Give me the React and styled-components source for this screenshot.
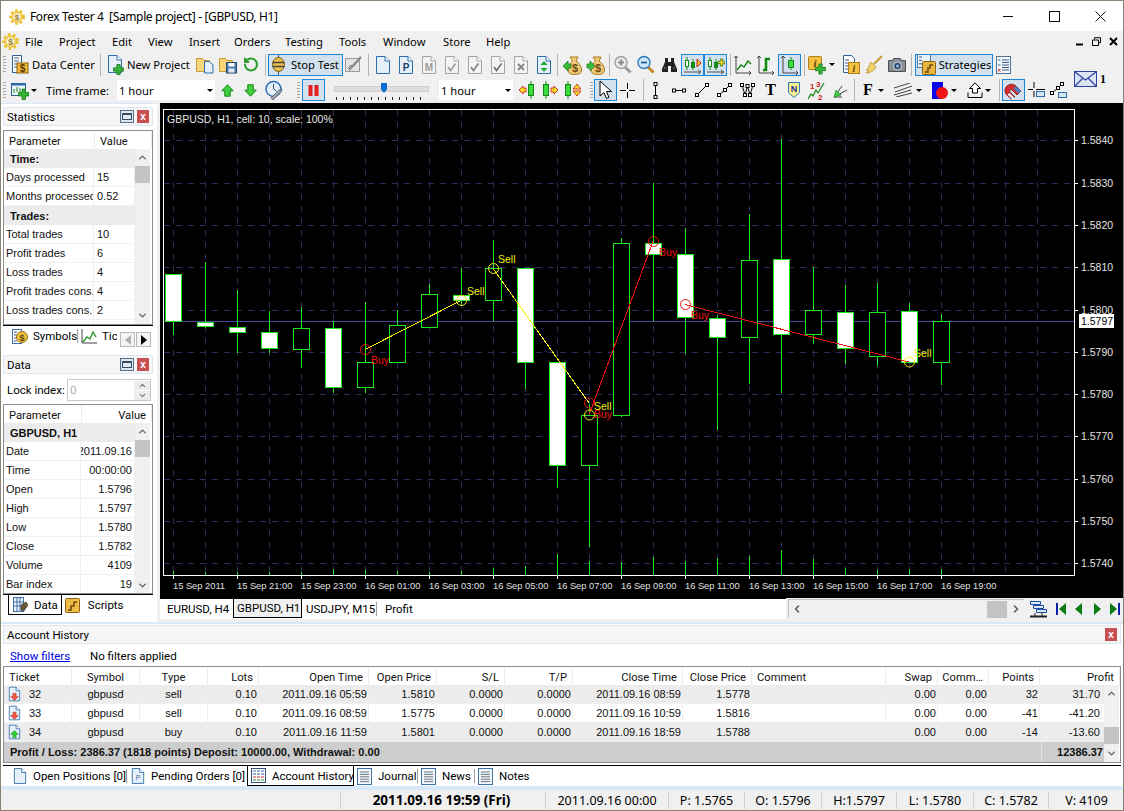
import React from 'react';
import styled, { createGlobalStyle } from 'styled-components';
import { ChevronUp, ChevronDown, ChevronLeft, ChevronRight, RotateCcw } from 'lucide-react';

const UI = '"Noto Sans", "Liberation Sans", sans-serif';
const TAB = 'Roboto, "Liberation Sans", sans-serif';
const GRID = '"Liberation Sans", Arial, sans-serif';

const Global = createGlobalStyle`
  html, body { margin: 0; padding: 0; background: #f0f0f0; }
  * { box-sizing: border-box; }
`;

const Window = styled.div`
  width: 1124px;
  height: 811px;
  display: flex;
  flex-direction: column;
  overflow: hidden;
  background: #f0f0f0;
  color: #000;
  font: 11.5px ${TAB};
  outline: 1px solid #8a8374;
  outline-offset: -1px;
`;

const TitleBar = styled.div`
  height: 31px;
  flex: none;
  background: #fff;
  display: flex;
  align-items: center;
  padding: 2px 0 0 9px;
  gap: 5px;
`;
const TitleText = styled.div`
  font: 12px ${UI};
  white-space: pre;
  letter-spacing: -0.36px;
`;
const WinButtons = styled.div`
  margin-left: auto;
  margin-right: 1px;
  display: flex;
`;
const WinButton = styled.div`
  width: 46px;
  height: 30px;
  display: flex;
  align-items: center;
  justify-content: center;
`;

const MenuBar = styled.div`
  height: 21px;
  flex: none;
  display: flex;
  align-items: center;
  padding-left: 2px;
  font: 11.2px ${UI};
`;
const MenuItem = styled.div`
  width: ${p => p.$w}px;
  flex: none;
`;
const DocButtons = styled.div`
  margin-left: auto;
  margin-right: 6px;
  display: flex;
  align-items: center;
  gap: 8px;
`;

const ToolArea = styled.div`
  display: flex;
  flex: none;
  height: 51px;
  font: 11.2px ${UI};
`;
const ToolRows = styled.div`
  width: 1070px;
`;
const ToolRow = styled.div`
  height: ${p => p.$h}px;
  display: flex;
  align-items: center;
  padding-left: 3px;
`;
const Grip = styled.div`
  width: 3px;
  height: 17px;
  flex: none;
  margin-left: ${p => p.$ml || 0}px;
  background: repeating-linear-gradient(#a8a8a8 0 1px, transparent 1px 3px);
`;
const Sep = styled.div`
  width: 1px;
  height: 22px;
  flex: none;
  background: #b4b4b4;
  margin: 0 ${p => p.$mr}px 0 ${p => p.$ml}px;
`;
const Tool = styled.div`
  width: ${p => p.$w}px;
  height: 22px;
  flex: none;
  margin-left: ${p => p.$ml || 0}px;
  display: flex;
  align-items: center;
  justify-content: center;
  gap: 3px;
  white-space: nowrap;
  ${p => p.$on && 'background: #d3e1ee; outline: 1px solid #1c86d8; outline-offset: -1px;'}
  ${p => p.$text && 'justify-content: flex-start;'}
`;
const Caret = styled.div`
  width: 0;
  height: 0;
  flex: none;
  margin-left: ${p => p.$ml || 0}px;
  border-left: 3px solid transparent;
  border-right: 3px solid transparent;
  border-top: 3px solid #000;
`;
const Label = styled.div`
  margin-left: ${p => p.$ml}px;
  width: ${p => p.$w}px;
  flex: none;
  white-space: nowrap;
`;
const SerifGlyph = styled.div`
  font: bold 16px "Liberation Serif", serif;
  line-height: 1;
`;
const Select = styled.div`
  width: ${p => p.$w}px;
  height: 20px;
  flex: none;
  margin-left: ${p => p.$ml}px;
  background: #fff;
  display: flex;
  align-items: center;
  justify-content: space-between;
  padding: 0 2px;
`;
const SliderBox = styled.div`
  width: 95px;
  height: 22px;
  flex: none;
  margin-left: 9px;
  display: flex;
  flex-direction: column;
  align-items: stretch;
  padding-top: 7px;
  position: relative;
`;
const SliderTrack = styled.div`
  height: 6px;
  background: #dedede;
  border: 1px solid #cfcfcf;
`;
const SliderThumb = styled.div`
  position: absolute;
  left: 47px;
  top: 4px;
  width: 6px;
  height: 10px;
  background: #0a6fd0;
  clip-path: polygon(0 0, 100% 0, 100% 65%, 50% 100%, 0 65%);
`;
const SliderTicks = styled.div`
  height: 3px;
  margin: 5px 2px 0;
  background: repeating-linear-gradient(90deg, #222 0 1px, transparent 1px 7px);
`;
const MailBox = styled.div`
  display: flex;
  align-items: center;
  gap: 3px;
  margin: 15px 0 0 4px;
  height: 24px;
  font: bold 12px "Liberation Serif", serif;
`;

const Main = styled.div`
  display: flex;
  height: 519px;
  flex: none;
`;
const Side = styled.div`
  width: 157px;
  flex: none;
  padding: 3px 4px 0 3px;
  background: #fff;
  border-top: 1px solid #d7e9f8;
`;
const ChartCol = styled.div`
  width: 964px;
  margin-left: 3px;
  flex: none;
  display: flex;
  flex-direction: column;
`;
const ChartSvg = styled.svg`
  display: block;
  width: 964px;
  height: 495px;
  background: #000;
  font-family: ${GRID};
`;
const ChartTabs = styled.div`
  height: 22px;
  display: flex;
  align-items: stretch;
`;
const ChartTabStrip = styled.div`
  width: 626px;
  flex: none;
  background: #fff;
  border-top: 1px solid #000;
  display: flex;
  padding-left: 3px;
  height: 21px;
`;
const ChartTab = styled.div`
  height: 19px;
  display: flex;
  align-items: center;
  padding: 0 4px;
  width: ${p => p.$w}px;
  flex: none;
  white-space: nowrap;
  ${p => p.$on && 'background: #f0f0f0; border: solid #000; border-width: 0 1px 1px; padding-left: 3px;'}
`;
const TabDivider = styled.div`
  width: 1px;
  height: 14px;
  flex: none;
  background: #a0a0a0;
  margin: 3px ${p => p.$mr || 4}px 0 ${p => p.$ml || 0}px;
`;
const HScroll = styled.div`
  width: 236px;
  height: 19px;
  flex: none;
  margin: 1px 0 0 2px;
  border: solid #c0c0c0;
  border-width: 1px 0 0 1px;
  background: #f0f0f0;
  display: flex;
  align-items: center;
  color: #555;
  padding: 0 2px;
`;
const HThumb = styled.div`
  width: 20px;
  height: 17px;
  background: #c4c4c4;
  margin-left: auto;
  margin-right: 3px;
`;
const NavButtons = styled.div`
  display: flex;
  align-items: center;
  margin-left: 5px;
  gap: 8px;
`;

const PanelHead = styled.div`
  height: 19px;
  background: #f6f6f6;
  border: 1px solid #dce6ee;
  display: flex;
  align-items: center;
  justify-content: space-between;
  padding: 0 3px 0 3px;
`;
const PanelBtns = styled.div`
  display: flex;
  gap: 3px;
  align-items: center;
`;
const RedClose = styled.div`
  width: 12px;
  height: 13px;
  background: #c75050;
  color: #fff;
  font: bold 10px ${GRID};
  display: flex;
  align-items: center;
  justify-content: center;
  line-height: 1;
`;
const RestoreBox = styled.div`
  width: 14px;
  height: 13px;
  border: 1px solid #51708f;
  background: #dfe8f0;
  display: flex;
  align-items: center;
  justify-content: center;
  &::after {
    content: '';
    width: 8px;
    height: 4px;
    border: 1px solid #3a4d60;
    border-top-width: 2px;
  }
`;
const GridTable = styled.div`
  height: ${p => p.$h}px;
  margin-top: ${p => p.$mt || 0}px;
  border: 1px solid #8e8e8e;
  background: #fff;
  overflow: hidden;
  font: 11px ${GRID};
  color: #111;
`;
const HeadRow = styled.div`
  display: grid;
  grid-template-columns: ${p => p.$cols};
  height: ${p => p.$h || 18}px;
  background: #fff;
`;
const HeadCell = styled.div`
  display: flex;
  align-items: center;
  padding: 2px 5px 0;
  white-space: nowrap;
  overflow: hidden;
  border-right: 1px solid #ececec;
  justify-content: ${p => p.$align || 'flex-start'};
  font: 11.2px ${TAB};
`;
const BodyWrap = styled.div`
  display: flex;
`;
const Rows = styled.div`
  flex: 1;
  min-width: 0;
`;
const Row = styled.div`
  display: grid;
  grid-template-columns: ${p => p.$cols};
  height: ${p => p.$h || 19}px;
  border-bottom: 1px solid #f0f0f0;
  background: ${p => p.$bg || '#fff'};
`;
const Cell = styled.div`
  display: flex;
  align-items: center;
  white-space: nowrap;
  overflow: hidden;
  padding: 0 ${p => p.$pr ?? 3}px 0 ${p => p.$pl ?? 3}px;
  border-right: 1px solid #f0f0f0;
  justify-content: ${p => p.$align || 'flex-start'};
  gap: 8px;
`;
const GroupRow = styled.div`
  height: 19px;
  background: #ececec;
  font-weight: bold;
  display: flex;
  align-items: center;
  padding-left: 6px;
`;
const VScroll = styled.div`
  width: 15px;
  flex: none;
  margin-right: ${p => p.$mr || 2}px;
  background: #f0f0f0;
  display: flex;
  flex-direction: column;
  height: ${p => p.$h}px;
  color: #606060;
`;
const ScrollBtn = styled.div`
  height: 17px;
  flex: none;
  display: flex;
  align-items: center;
  justify-content: center;
`;
const VThumb = styled.div`
  height: 17px;
  flex: none;
  margin-top: ${p => p.$mt || 0}px;
  margin-bottom: auto;
  background: #c4c4c4;
`;
const SideTabs = styled.div`
  height: ${p => p.$h}px;
  border-top: 1px solid #000;
  display: flex;
  align-items: flex-start;
  position: relative;
`;
const SideTab = styled.div`
  height: 20px;
  display: flex;
  align-items: center;
  gap: 5px;
  flex: none;
  padding-left: ${p => p.$pl}px;
  width: ${p => p.$w}px;
  margin-left: ${p => p.$ml || 0}px;
  white-space: nowrap;
  overflow: hidden;
  ${p => p.$on && 'border: solid #000; border-width: 0 1px 1px; margin-top: 0; background: #fff;'}
`;
const ArrowBtn = styled.div`
  width: 15px;
  height: 15px;
  flex: none;
  margin: 6px 0 0 ${p => p.$ml}px;
  border: 1px solid #b8b8b8;
  background: #f4f4f4;
  display: flex;
  align-items: center;
  justify-content: center;
`;
const Triangle = styled.div`
  width: 0;
  height: 0;
  border-top: 5px solid transparent;
  border-bottom: 5px solid transparent;
  ${p => p.$dir === 'l' ? `border-right: 6px solid ${p.$c};` : `border-left: 6px solid ${p.$c};`}
`;
const LockRow = styled.div`
  height: 30px;
  display: flex;
  align-items: center;
  padding: 2px 0 0 4px;
`;
const LockLabel = styled.div`
  width: 60px;
  flex: none;
  white-space: nowrap;
`;
const SpinInput = styled.div`
  width: 84px;
  height: 22px;
  flex: none;
  border: 1px solid #c8c8c8;
  color: #b0b0b0;
  padding-left: 2px;
  display: flex;
  align-items: center;
  justify-content: space-between;
`;
const Spin = styled.div`
  width: 16px;
  height: 100%;
  display: flex;
  flex-direction: column;
  gap: 1px;
  padding: 1px 0;
`;
const SpinPart = styled.div`
  flex: 1;
  background: #ececec;
  display: flex;
  align-items: center;
  justify-content: center;
  color: #777;
`;

const Dock = styled.div`
  height: 168px;
  flex: none;
  background: #fff;
  border-top: 2px solid #d7e9f8;
  border-bottom: 4px solid #d7e9f8;
  padding: 1px 3px 0;
`;
const FilterRow = styled.div`
  height: 22px;
  display: flex;
  align-items: center;
  padding: 2px 0 0 7px;
`;
const FilterLink = styled.div`
  color: #0000e0;
  text-decoration: underline;
  width: 80px;
`;
const SummaryRow = styled.div`
  display: flex;
  height: 20px;
  background: #cdcdcd;
  font-weight: bold;
  align-items: center;
`;
const SummaryText = styled.div`
  flex: 1;
  padding-left: 6px;
`;
const SummaryTotal = styled.div`
  width: 63px;
  flex: none;
  height: 100%;
  display: flex;
  align-items: center;
  justify-content: flex-end;
  padding-right: 1px;
  border-left: 1px solid #e4e4e4;
`;
const BottomTabs = styled.div`
  height: 22px;
  margin-top: 2px;
  border-top: 1px solid #000;
  display: flex;
  align-items: flex-start;
  padding-left: 10px;
`;
const BottomTab = styled.div`
  height: 20px;
  display: flex;
  align-items: center;
  gap: 6px;
  flex: none;
  width: ${p => p.$w}px;
  padding-left: ${p => p.$pl || 0}px;
  white-space: nowrap;
  ${p => p.$on && 'border: solid #000; border-width: 0 1px 1px;'}
`;

const StatusBar = styled.div`
  height: 20px;
  flex: none;
  display: flex;
  align-items: center;
  font: 12.5px ${UI};
`;
const StatusCell = styled.div`
  width: ${p => p.$w}px;
  flex: none;
  height: 17px;
  display: flex;
  align-items: center;
  justify-content: center;
  white-space: nowrap;
  ${p => p.$sep && 'border-left: 1px solid #d0d0d0;'}
  ${p => p.$bold && 'font-weight: bold; font-size: 13.5px; padding-right: 3px;'}
`;

const Svg = styled.svg`
  display: block;
  flex: none;
`;

/* ---------- icons ---------- */

const Logo = ({ s = 16 }) => (
  <Svg width={s} height={s} viewBox="0 0 16 16">
    <circle cx="8" cy="8" r="6.4" fill="none" stroke="#efc22c" strokeWidth="3" strokeDasharray="2.4 2.2" />
    <circle cx="8" cy="8" r="5.4" fill="#f7d862" stroke="#d9a51c" strokeWidth="0.6" />
    <circle cx="8" cy="8" r="3.6" fill="#f1efe3" />
    <text x="8" y="11" textAnchor="middle" fontSize="8" fontWeight="bold" fill="#a07a2a" fontFamily={GRID}>$</text>
  </Svg>
);

const Doc = ({ w = 16, h = 20, fill = '#e6f0fa', line = '#2f6da8', children }) => (
  <Svg width={w} height={h} viewBox="0 0 16 20">
    <path d="M1.5 1.5h8.5l4.5 4.5v12.5h-13z" fill={fill} stroke={line} />
    <path d="M10 1.5v4.5h4.5" fill="#fff" stroke={line} />
    {children}
  </Svg>
);
const Plus = ({ x, y, s = 9, c = '#35b535' }) => (
  <path
    d={`M${x + s / 3} ${y}h${s / 3}v${s / 3}h${s / 3}v${s / 3}h${-s / 3}v${s / 3}h${-s / 3}v${-s / 3}h${-s / 3}v${-s / 3}h${s / 3}z`}
    fill={c}
    stroke="#146c14"
    strokeWidth="0.7"
  />
);
const Lines = ({ x = 4, y = 8, w = 8, n = 4, c = '#3a5f86', gap = 2.4 }) => (
  <path d={Array.from({ length: n }, (_, i) => `M${x} ${y + i * gap}h${w}`).join('')} stroke={c} strokeWidth="1" />
);

const DataCenterIcon = () => (
  <Svg width={18} height={21} viewBox="0 0 18 21">
    <path d="M1.5 1.5h9v17h-9z" fill="#fff" stroke="#335f8c" />
    <Lines x={3} y={4} w={5} n={4} gap={3} />
    <rect x="6" y="9" width="11" height="10" fill="#f3b73a" stroke="#8a5e10" />
    <text x="11.5" y="17.5" textAnchor="middle" fontSize="10" fontWeight="bold" fill="#5a3c06" fontFamily={GRID}>$</text>
  </Svg>
);
const NewDocIcon = () => (
  <Svg width={17} height={21} viewBox="0 0 17 21">
    <path d="M1.5 1.5h8.5l4.5 4.5v12.5h-13z" fill="#e6f0fa" stroke="#2f6da8" />
    <path d="M10 1.5v4.5h4.5" fill="#fff" stroke="#2f6da8" />
    <Plus x={6.5} y={10.5} s={10} />
  </Svg>
);
const FolderIcon = ({ save }) => (
  <Svg width={18} height={19} viewBox="0 0 18 19">
    <path d="M.5 3.5h6l1.5 2h5.5v11H.5z" fill="#f8d77c" stroke="#c99a2e" />
    {save ? (
      <>
        <rect x="7.5" y="7.5" width="10" height="10.5" fill="#4f7db4" stroke="#23486f" />
        <rect x="9.5" y="8" width="6" height="3.5" fill="#fff" />
        <rect x="9.5" y="13.5" width="6" height="4" fill="#e3e9f0" />
      </>
    ) : (
      <path d="M8.5 6.5h5l3.5 3.5v8h-8.5z" fill="#e6f0fa" stroke="#2f6da8" />
    )}
  </Svg>
);
const StopIcon = () => (
  <Svg width={13} height={21} viewBox="0 0 13 21">
    <path d="M6.5 0v21" stroke="#555" />
    <ellipse cx="6.5" cy="10.5" rx="6" ry="7" fill="#ecc04a" stroke="#6e5a1c" />
    <path d="M.7 8.5h11.6M.7 12.5h11.6" stroke="#444" strokeWidth="1.6" />
  </Svg>
);
const DisabledChart = () => (
  <Svg width={17} height={19} viewBox="0 0 17 19">
    <rect x=".5" y="3.5" width="14" height="13" fill="#e4e4e4" stroke="#9a9a9a" />
    <path d="M3 13l3-3 2 2 4-5" stroke="#777" fill="none" />
    <path d="M4 15L16 2" stroke="#8a8a8a" strokeWidth="2.2" />
  </Svg>
);
const GrayDoc = ({ children }) => (
  <Doc fill="#f4f4f4" line="#a4a4a4">{children}</Doc>
);
const Check = ({ c = '#9a9a9a' }) => (
  <path d="M4 12l2.5 3.5 5-7" fill="none" stroke={c} strokeWidth="1.6" />
);
const Bag = ({ dir }) => (
  <Svg width={19} height={20} viewBox="0 0 19 20">
    <path d="M7 2h8l-2 4c3 2 5.5 5 5.5 9 0 3-2 4.500-6.500 4.500s-7-1.500-7-4.500c0-4 2.500-7 4.500-9z" fill="#efc979" stroke="#a8791e" />
    <text x="12" y="17" textAnchor="middle" fontSize="11" fontWeight="bold" fill="#6f4a0c" fontFamily={GRID}>$</text>
    <path
      d={dir === 'l' ? 'M0 11l5-5v3h3v4H5v3z' : 'M9 11L4 6v3H1v4h3v3z'}
      fill="#3bbf3b"
      stroke="#14701a"
      strokeWidth=".7"
    />
  </Svg>
);
const Magnifier = ({ plus, gray }) => (
  <Svg width={18} height={19} viewBox="0 0 18 19">
    <path d="M10.500 11.500l6 6" stroke={gray ? '#9c9c9c' : '#c08a2a'} strokeWidth="3" />
    <circle cx="7" cy="7.500" r="6" fill={gray ? '#e8e8e8' : '#cfe6fa'} stroke={gray ? '#a0a0a0' : '#2f78bd'} strokeWidth="1.4" />
    <path d={plus ? 'M4 7.500h6M7 4.500v6' : 'M4 7.500h6'} stroke={gray ? '#8a8a8a' : '#1f5f9f'} strokeWidth="1.800" />
  </Svg>
);
const Binoculars = () => (
  <Svg width={15} height={16} viewBox="0 0 15 16">
    <path d="M3 1h3v4h3V1h3v4l3 7v3H9V9H6v6H0v-3l3-7z" fill="#222" />
    <path d="M2 11h2M11 11h2" stroke="#888" />
  </Svg>
);
const AxisCandles = ({ mark }) => (
  <Svg width={19} height={20} viewBox="0 0 19 20">
    <path d="M1 17h16M15 15l3 2-3 2" fill="none" stroke="#555" />
    <path d="M4 2v13M10 4v11" stroke="#148a14" />
    <rect x="2.500" y="5.500" width="3" height="6" fill="#fff" stroke="#148a14" />
    <rect x="8.500" y="7.500" width="3" height="5" fill="#148a14" stroke="#148a14" />
    {mark === 'arrow' ? (
      <path d="M14 4l4 4-4 4z" fill="#f0d020" stroke="#c02020" />
    ) : (
      <Plus x={12} y={4} s={7} c="#f3d42a" />
    )}
  </Svg>
);
const Axes = ({ children }) => (
  <Svg width={18} height={20} viewBox="0 0 18 20">
    <path d="M2 1v17h15" fill="none" stroke="#444" />
    <path d="M0 3l2-2 2 2M15 16l2 2-2 2" fill="none" stroke="#444" />
    {children}
  </Svg>
);
const InfoBox = () => (
  <Svg width={18} height={20} viewBox="0 0 18 20">
    <rect x=".5" y="1.500" width="13" height="13" rx="1" fill="#f3c13f" stroke="#a9801c" />
    <text x="7" y="12" textAnchor="middle" fontSize="11" fontStyle="italic" fontWeight="bold" fill="#5b4206" fontFamily="Liberation Serif">i</text>
    <Plus x={7.500} y={9} s={10} />
  </Svg>
);
const InfoDoc = () => (
  <Svg width={18} height={21} viewBox="0 0 18 21">
    <path d="M1.500 1.500h8l3 3v14h-11z" fill="#fff" stroke="#335f8c" />
    <Lines x={3} y={6} w={4} n={4} gap={3} />
    <rect x="6.500" y="8.500" width="11" height="11" fill="#f3c13f" stroke="#a9801c" />
    <text x="12" y="18" textAnchor="middle" fontSize="10" fontStyle="italic" fontWeight="bold" fill="#5b4206" fontFamily="Liberation Serif">i</text>
  </Svg>
);
const Broom = () => (
  <Svg width={18} height={19} viewBox="0 0 18 19">
    <path d="M17 1L9 9" stroke="#c99a2e" strokeWidth="2" />
    <path d="M6 7l5 5c-2 4-6 6-10 6 2-1 3-3 3-3-1 .5-2 .5-3 .5 2-1 3-5 5-8.500z" fill="#efd36a" stroke="#b48a1f" strokeWidth=".7" />
  </Svg>
);
const Camera = () => (
  <Svg width={18} height={16} viewBox="0 0 18 16">
    <path d="M.5 3.500h4l1-2h7l1 2h4v11H.5z" fill="#8a8f96" stroke="#4a4e54" />
    <circle cx="9.500" cy="9" r="4" fill="#2f4c70" stroke="#dfe3e8" />
    <circle cx="9.500" cy="9" r="1.600" fill="#8fb7e2" />
  </Svg>
);
const StrategyIcon = () => (
  <Svg width={19} height={22} viewBox="0 0 19 22">
    <rect x=".5" y=".5" width="13" height="13" fill="#e8f0f8" stroke="#567ca3" />
    <Lines x={2} y={3} w={3} n={3} gap={3.400} />
    <rect x="5.500" y="7.500" width="13" height="13" rx="1" fill="#eab440" stroke="#8a6414" />
    <path d="M8 18h3v-4h2v-3h3" fill="none" stroke="#6f4e0c" strokeWidth="1.500" />
  </Svg>
);
const ListIcon = ({ w = 15, h = 20 }) => (
  <Svg width={w} height={h} viewBox="0 0 15 20">
    <rect x=".5" y="1.500" width="14" height="17" fill="#f2f6fa" stroke="#4f7397" />
    <Lines x={6} y={5} w={7} n={5} gap={2.500} />
    <path d="M2 5h2.500M2 10h2.500" stroke="#3a5f86" />
    <path d="M2 14l2.500 2.500M4.500 14L2 16.500" stroke="#d02020" />
  </Svg>
);
const ChartPlus = () => (
  <Svg width={18} height={19} viewBox="0 0 18 19">
    <rect x=".5" y="2.500" width="14" height="12" fill="#eaf2fa" stroke="#2f5f93" />
    <path d="M.5 2.500h14v2H.5z" fill="#2f6da8" />
    <path d="M3 12V8M6 11V6M9 11V7" stroke="#1c8c1c" />
    <Plus x={7.500} y={8} s={10.500} />
  </Svg>
);
const VArrow = ({ up }) => (
  <Svg width={13} height={13} viewBox="0 0 13 13">
    <path d={up ? 'M6.500.8l5.700 6h-3v5.400h-5.400V6.800h-3z' : 'M6.500 12.200l5.700-6h-3V.8H3.800v5.400h-3z'} fill="#3ed23e" stroke="#138413" />
  </Svg>
);
const ClockWrench = () => (
  <Svg width={18} height={20} viewBox="0 0 18 20">
    <circle cx="8.500" cy="9" r="7.500" fill="#e4effa" stroke="#2e6fb6" strokeWidth="1.500" />
    <path d="M8.500 4v5l3 2" fill="none" stroke="#30557c" />
    <path d="M6 18l8-8 3-1 -1 3-8 8z" fill="#9aa3ad" stroke="#4a5058" strokeWidth=".7" />
  </Svg>
);
const Pause = () => (
  <Svg width={11} height={11} viewBox="0 0 11 11">
    <path d="M.5 0h4v11h-4zM6.500 0h4v11h-4z" fill="#e32020" />
  </Svg>
);
const CandleStep = ({ side }) => (
  <Svg width={17} height={18} viewBox="0 0 17 18">
    {side === 'l' && <path d="M0 9l4-4v2h3v4H4v2z" fill="#f2dc22" stroke="#c81818" strokeWidth=".8" />}
    <path d={side === 'l' ? 'M12 0v18' : 'M5 0v18'} stroke="#16841a" />
    <rect x={side === 'l' ? 9.500 : 2.500} y="3.500" width="5" height="11" fill="#3cdc3c" stroke="#16841a" />
    {side === 'r' && <path d="M17 9l-4-4v2h-3v4h3v2z" fill="#f2dc22" stroke="#c81818" strokeWidth=".8" />}
  </Svg>
);
const CandleUpDown = () => (
  <Svg width={17} height={18} viewBox="0 0 17 18">
    <path d="M4 0v18" stroke="#16841a" />
    <rect x="1.500" y="3.500" width="5" height="11" fill="#3cdc3c" stroke="#16841a" />
    <path d="M13 3l4 5H9zM13 15l4-5H9z" fill="#f2dc22" stroke="#c81818" strokeWidth=".8" />
  </Svg>
);
const CursorIcon = () => (
  <Svg width={14} height={20} viewBox="0 0 14 20">
    <path d="M1 1v15l4-3.500 2.500 6 2.500-1-2.500-6h5z" fill="#fff" stroke="#000" />
  </Svg>
);
const Cross = () => (
  <Svg width={15} height={15} viewBox="0 0 15 15">
    <path d="M7.500 0v6M7.500 9v6M0 7.500h6M9 7.500h6" stroke="#000" />
  </Svg>
);
const Nodes = ({ w, h, pts, extra }) => (
  <Svg width={w} height={h} viewBox={`0 0 ${w} ${h}`}>
    <polyline points={pts.map(p => p.join(',')).join(' ')} fill="none" stroke="#000" />
    {pts.map(([x, y]) => (
      <rect key={`${x}-${y}`} x={x - 1.500} y={y - 1.500} width="3" height="3" fill="#fff" stroke="#000" />
    ))}
    {extra}
  </Svg>
);
const ShieldN = () => (
  <Svg width={12} height={16} viewBox="0 0 12 16">
    <path d="M.5.500h11v10L6 15.500.5 10.500z" fill="#fbf08c" stroke="#2d78bf" />
    <text x="6" y="9.500" textAnchor="middle" fontSize="9" fontWeight="bold" fill="#1c2c8c" fontFamily={GRID}>N</text>
  </Svg>
);
const Waves = () => (
  <Svg width={17} height={20} viewBox="0 0 17 20">
    <path d="M0 19l3-5 2 2 3-6 2 3 3-5 3-5" fill="none" stroke="#128a12" strokeWidth="1.200" />
    <text x="2" y="9" fontSize="8" fontWeight="bold" fill="#d01818" fontFamily={GRID}>1</text>
    <text x="8" y="6.500" fontSize="8" fontWeight="bold" fill="#d01818" fontFamily={GRID}>3</text>
    <text x="10" y="19.500" fontSize="8" fontWeight="bold" fill="#d01818" fontFamily={GRID}>2</text>
  </Svg>
);
const Fan = () => (
  <Svg width={15} height={15} viewBox="0 0 15 15">
    <path d="M1 14L9 3M1 14L14 7M1 14h8" fill="none" stroke="#444" />
    <path d="M1 14l2-7 5 5z" fill="#44c844" stroke="#128a12" strokeWidth=".6" />
  </Svg>
);
const SlantLines = () => (
  <Svg width={18} height={14} viewBox="0 0 18 14">
    <path d="M0 5L16 0M1 9L18 3M0 12L17 7M2 14L18 10" stroke="#444" />
  </Svg>
);
const ColorSwatch = () => (
  <Svg width={16} height={17} viewBox="0 0 16 17">
    <rect width="11" height="17" fill="#0808e8" />
    <circle cx="10" cy="11" r="6" fill="#f01414" />
  </Svg>
);
const Export = () => (
  <Svg width={16} height={16} viewBox="0 0 16 16">
    <path d="M8 .8l5.500 5.700h-3V11h-5V6.500h-3z" fill="#fff" stroke="#000" />
    <path d="M1 10.500v5h14v-5" fill="none" stroke="#000" />
  </Svg>
);
const Magnet = () => (
  <Svg width={19} height={19} viewBox="0 0 19 19">
    <path d="M3 5a6.500 6.500 0 0 1 9 0l5 5-4 4-5-5a1 1 0 0 0-2 2l5 5-4 2-5-5a6 6 0 0 1 1-8z" fill="#d22c2c" stroke="#7c1010" strokeWidth=".8" />
    <path d="M12 5l5 5-2.500 2.500-5-5z" fill="#4a7fc0" />
    <path d="M5.500 12l5 5-2 1.500-5-5z" fill="#f0f0f0" />
  </Svg>
);
const CrossWin = () => (
  <Svg width={17} height={16} viewBox="0 0 17 16">
    <path d="M6 0v6M6 9v6M0 7.500h5M8 7.500h9" stroke="#000" />
    <rect x="8.500" y="9.500" width="8" height="5" fill="#d4e4f4" stroke="#2d6cb0" />
  </Svg>
);
const NodeWin = () => (
  <Nodes
    w={17}
    h={16}
    pts={[[2, 11], [8, 6], [12, 2]]}
    extra={<rect x="8.500" y="10.500" width="8" height="5" fill="#d4e4f4" stroke="#2d6cb0" />}
  />
);
const Mail = () => (
  <Svg width={23} height={16} viewBox="0 0 23 16">
    <rect x=".5" y=".5" width="22" height="15" fill="#dbe7f6" stroke="#2f3f9f" />
    <path d="M1 1l10.500 8L22 1M1 15l8-8M22 15l-8-8" fill="none" stroke="#2f3f9f" strokeWidth="1.200" />
  </Svg>
);
const TicketIcon = ({ up }) => (
  <Doc w={13} h={16}>
    <path
      d={up ? 'M8 8l5 5h-3v4H6v-4H3z' : 'M8 18l5-5h-3V9H6v4H3z'}
      fill={up ? '#2ed02e' : '#ee5a4a'}
      stroke={up ? '#12801a' : '#a82a20'}
      strokeWidth=".6"
    />
  </Doc>
);
const TabList = () => (
  <Svg width={15} height={17} viewBox="0 0 15 17">
    <rect x=".5" y=".5" width="14" height="16" fill="#f3f7fb" stroke="#3f70a6" />
    <Lines x={3} y={4} w={9} n={5} gap={2.400} c="#6a7684" />
  </Svg>
);
const TabGrid = () => (
  <Svg width={15} height={15} viewBox="0 0 15 15">
    <rect x=".5" y=".5" width="14" height="14" fill="#fff" stroke="#34527c" />
    <path d="M2 3h3M6 3h3M10 3h3M2 6h3M6 6h3M10 6h3" stroke="#3262a8" />
    <path d="M2 9h3M6 9h3M10 9h3" stroke="#cc3030" />
    <path d="M2 12h3M6 12h3M10 12h3" stroke="#309030" />
  </Svg>
);
const SymbolsIcon = () => (
  <Svg width={16} height={15} viewBox="0 0 16 15">
    <rect x=".5" y=".5" width="9" height="14" fill="#fff" stroke="#3f70a6" />
    <Lines x={2} y={3} w={3} n={4} gap={3} />
    <circle cx="10" cy="8" r="5.500" fill="#f0c23c" stroke="#9a7414" />
    <text x="10" y="11.500" textAnchor="middle" fontSize="9" fontWeight="bold" fill="#5a3c06" fontFamily={GRID}>$</text>
  </Svg>
);
const TickIcon = () => (
  <Svg width={16} height={15} viewBox="0 0 16 15">
    <path d="M1 0v14h15" fill="none" stroke="#444" />
    <path d="M2 13l4-5 3 2 3-7 3 5" fill="none" stroke="#2a9a2a" strokeWidth="1.400" />
  </Svg>
);
const DataIcon = () => (
  <Svg width={16} height={15} viewBox="0 0 16 15">
    <rect x=".5" y=".5" width="10" height="14" fill="#eef4fa" stroke="#3f70a6" />
    <path d="M4 1v13M7 1v13M1 5h9M1 9h9" stroke="#3f70a6" />
    <path d="M8 8l5-3 2 3-4 6-3-1z" fill="#6b5a3a" stroke="#33291a" strokeWidth=".6" />
  </Svg>
);
const ScriptIcon = () => (
  <Svg width={15} height={15} viewBox="0 0 15 15">
    <rect x=".5" y=".5" width="14" height="14" rx="1" fill="#efbc48" stroke="#8a6414" />
    <path d="M3 12h3V8h3V4h3" fill="none" stroke="#6f4e0c" strokeWidth="1.600" />
  </Svg>
);
const WindowList = () => (
  <Svg width={19} height={19} viewBox="0 0 19 19">
    <path d="M1.500 1.500h10v3h-10zM4.500 5.500h10v3h-10zM7.500 9.500h10v3h-10z" fill="#dbe8f6" stroke="#1d4fa0" />
    <path d="M1 16.500h17" stroke="#222" strokeWidth="2" />
    <path d="M6 13v3M13 13v3" stroke="#222" />
  </Svg>
);
const NavIcon = ({ d }) => (
  <Svg width={10} height={12} viewBox="0 0 10 12">
    {d.bar !== undefined && <rect x={d.bar} y="0" width="2" height="12" fill="#0a1ea8" />}
    <path d={d.path} fill="#0a7a12" />
  </Svg>
);

/* ---------- chart data ---------- */

// x, wick top, body top, body bottom, wick bottom, hollow
const candles = [
  [173, 274, 274, 321, 335, 0],
  [205, 262, 322, 326, 328, 0],
  [237, 290, 327, 332, 353, 0],
  [269, 311, 332, 348, 353, 0],
  [301, 307, 328, 349, 368, 1],
  [333, 321, 328, 387, 393, 0],
  [365, 302, 362, 387, 393, 1],
  [397, 310, 325, 362, 362, 1],
  [429, 284, 294, 327, 327, 1],
  [461, 268, 295, 300, 306, 0],
  [493, 240, 268, 300, 321, 1],
  [525, 268, 268, 362, 389, 0],
  [557, 362, 362, 465, 488, 0],
  [589, 404, 415, 465, 547, 1],
  [621, 238, 243, 415, 417, 1],
  [653, 183, 243, 254, 321, 0],
  [685, 228, 254, 317, 354, 0],
  [717, 315, 318, 337, 430, 0],
  [749, 214, 260, 337, 384, 1],
  [781, 139, 259, 334, 393, 0],
  [813, 267, 310, 334, 344, 1],
  [845, 285, 312, 348, 364, 0],
  [877, 283, 312, 356, 366, 1],
  [909, 303, 311, 362, 362, 0],
  [941, 314, 321, 362, 385, 1],
];
const volumes = [571, 572, 572, 572, 572, 569, 570, 571, 572, 571, 568, 566, 554, 561, 562, 557, 561, 558, 556, 550, 559, 568, 570, 569, 569];
const priceRows = [
  ['1.5840', 140], ['1.5830', 183], ['1.5820', 225], ['1.5810', 267], ['1.5800', 310], ['1.5790', 352],
  ['1.5780', 394], ['1.5770', 436], ['1.5760', 479], ['1.5750', 521], ['1.5740', 563],
];
const times = ['15 Sep 2011', '15 Sep 21:00', '15 Sep 23:00', '16 Sep 01:00', '16 Sep 03:00', '16 Sep 05:00', '16 Sep 07:00', '16 Sep 09:00', '16 Sep 11:00', '16 Sep 13:00', '16 Sep 15:00', '16 Sep 17:00', '16 Sep 19:00'];
const RED = '#ee1010';
const YEL = '#f6f010';
const trades = [
  { from: [365, 349.5], to: [461, 300.5], line: YEL },
  { from: [493, 268.5], to: [589, 403], line: YEL },
  { from: [589, 415], to: [653, 241.5], line: RED },
  { from: [685, 304.5], to: [909, 362], line: RED },
];
const marks = [
  [365, 349.5, RED], [461, 300.5, YEL], [493, 268.5, YEL], [589, 403, RED], [589, 415, YEL], [653, 241.5, RED], [685, 304.5, RED], [909, 362, YEL],
];
const tags = [
  [371, 364, 'Buy', RED], [467, 295, 'Sell', YEL], [498, 263, 'Sell', YEL], [594, 410, 'Sell', YEL],
  [594, 418, 'Buy', RED], [659, 256, 'Buy', RED], [691, 319, 'Buy', RED], [914, 357, 'Sell', YEL],
];

const GREEN = '#1ee81e';
const Chart = () => {
  const xs = Array.from({ length: 28 }, (_, i) => 173 + i * 32);
  return (
    <ChartSvg viewBox="160 103 964 495">
      <g stroke="#2c2a5c" strokeDasharray="6 6" shapeRendering="crispEdges">
        {xs.map(x => <line key={x} x1={x + 0.5} y1="110" x2={x + 0.5} y2="575" />)}
        {priceRows.map(([, y]) => <line key={y} x1="164" y1={y + 0.5} x2="1074" y2={y + 0.5} />)}
      </g>
      <line x1="164" y1="321.500" x2="1074" y2="321.500" stroke="#47479a" shapeRendering="crispEdges" />
      <g stroke={GREEN} shapeRendering="crispEdges">
        {volumes.map((top, i) => <line key={i} x1={173.5 + i * 32} y1={top} x2={173.5 + i * 32} y2="575" />)}
        {candles.map(([x, hi, top, bot, lo, hollow]) => (
          <g key={x}>
            <line x1={x + 0.5} y1={hi} x2={x + 0.5} y2={lo} />
            <rect x={x - 7.5} y={top + 0.5} width="16" height={bot - top} fill={hollow ? '#000' : '#fff'} />
          </g>
        ))}
      </g>
      <g strokeWidth="1" shapeRendering="crispEdges">
        {trades.map(t => (
          <line key={t.from[0]} x1={t.from[0]} y1={t.from[1]} x2={t.to[0]} y2={t.to[1]} stroke={t.line} />
        ))}
      </g>
      {marks.map(([x, y, c]) => (
        <circle key={`${x}-${y}`} cx={x + 0.5} cy={y} r="5" fill="none" stroke={c} />
      ))}
      <g fontSize="10.500">
        {tags.map(([x, y, t, c]) => <text key={`${x}-${y}`} x={x} y={y} fill={c}>{t}</text>)}
      </g>
      <path d="M163.500 575.500V109.500H1074.500V575.500H163.500" fill="none" stroke="#fff" shapeRendering="crispEdges" />
      <text x="167" y="123" fontSize="10.500" fill="#e8e8e8">GBPUSD, H1, cell: 10, scale: 100%</text>
      <g fill="#e4e4e4" fontSize="10.500">
        {priceRows.map(([p, y]) => (
          <g key={p}>
            <line x1="1074" y1={y + 0.5} x2="1078" y2={y + 0.5} stroke="#fff" shapeRendering="crispEdges" />
            <text x="1081" y={y + 3.500}>{p}</text>
          </g>
        ))}
      </g>
      <rect x="1079" y="314" width="35" height="14" fill="#fff" />
      <text x="1081" y="324.500" fontSize="10.500" fill="#000">1.5797</text>
      <g fill="#e0e0e0" fontSize="9.300">
        {times.map((t, i) => (
          <g key={t}>
            <line x1={173.5 + i * 64} y1="575" x2={173.5 + i * 64} y2="579" stroke="#fff" shapeRendering="crispEdges" />
            <text x={173 + i * 64} y="589">{t}</text>
          </g>
        ))}
      </g>
    </ChartSvg>
  );
};

/* ---------- side tables ---------- */

const statRows = [
  ['g', 'Time:'],
  ['Days processed', '15'],
  ['Months processed', '0.52'],
  ['g', 'Trades:'],
  ['Total trades', '10'],
  ['Profit trades', '6'],
  ['Loss trades', '4'],
  ['Profit trades cons.', '4'],
  ['Loss trades cons.', '2'],
  ['', ''],
];
const dataRows = [
  ['g', 'GBPUSD, H1'],
  ['Date', '2011.09.16'],
  ['Time', '00:00:00'],
  ['Open', '1.5796'],
  ['High', '1.5797'],
  ['Low', '1.5780'],
  ['Close', '1.5782'],
  ['Volume', '4109'],
  ['Bar index', '19'],
];

const SideTable = ({ rows, h, cols, headCols, bodyH, valueAlign, valueHead, mt }) => (
  <GridTable $h={h} $mt={mt}>
    <HeadRow $cols={headCols}>
      <HeadCell>Parameter</HeadCell>
      <HeadCell $align={valueHead}>Value</HeadCell>
    </HeadRow>
    <BodyWrap>
      <Rows>
        {rows.map(([a, b], i) =>
          a === 'g' ? (
            <GroupRow key={i}>{b}</GroupRow>
          ) : (
            <Row key={i} $cols={cols}>
              <Cell $pl={2}>{a}</Cell>
              <Cell $align={valueAlign} $pl={valueAlign ? 0 : 3} $pr={valueAlign ? 2 : 3}>{b}</Cell>
            </Row>
          )
        )}
      </Rows>
      <VScroll $h={bodyH}>
        <ScrollBtn><ChevronUp size={11} strokeWidth={3} /></ScrollBtn>
        <VThumb />
        <ScrollBtn><ChevronDown size={11} strokeWidth={3} /></ScrollBtn>
      </VScroll>
    </BodyWrap>
  </GridTable>
);

const PanelTitle = ({ children }) => (
  <PanelHead>
    {children}
    <PanelBtns>
      <RestoreBox />
      <RedClose>x</RedClose>
    </PanelBtns>
  </PanelHead>
);

/* ---------- history table ---------- */

const histCols = '68px 68px 68px 51px 110px 68px 68px 68px 110px 69px 134px 52px 51px 51px 1fr';
const rowCols = '68px 68px 68px 51px 110px 68px 68px 68px 110px 69px 134px 52px 51px 51px 62px';
const histHead = [
  ['Ticket', 'flex-start'], ['Symbol', 'center'], ['Type', 'center'], ['Lots', 'flex-end'], ['Open Time', 'flex-end'],
  ['Open Price', 'flex-end'], ['S/L', 'flex-end'], ['T/P', 'flex-end'], ['Close Time', 'flex-end'], ['Close Price', 'flex-end'],
  ['Comment', 'flex-start'], ['Swap', 'flex-end'], ['Comm…', 'flex-end'], ['Points', 'flex-end'], ['Profit', 'flex-end'],
];
const histRows = [
  [32, 'sell', '2011.09.16 05:59', '1.5810', '2011.09.16 08:59', '1.5778', '32', '31.70', '#ececec'],
  [33, 'sell', '2011.09.16 08:59', '1.5775', '2011.09.16 10:59', '1.5816', '-41', '-41.20', '#fff'],
  [34, 'buy', '2011.09.16 11:59', '1.5801', '2011.09.16 18:59', '1.5788', '-14', '-13.60', '#ececec'],
];
const R = ({ children }) => <Cell $align="flex-end" $pr={1} $pl={0}>{children}</Cell>;

const menu = [
  ['File', 34], ['Project', 53], ['Edit', 36], ['View', 41], ['Insert', 45], ['Orders', 51], ['Testing', 54], ['Tools', 44], ['Window', 60], ['Store', 43], ['Help', 40],
];

export default function App() {
  return (
    <Window>
      <Global />
      <TitleBar>
        <Logo />
        <TitleText>Forex Tester 4  [Sample project] - [GBPUSD, H1]</TitleText>
        <WinButtons>
          <WinButton>
            <Svg width="11" height="11" viewBox="0 0 11 11"><path d="M0 5.500h10" stroke="#111" /></Svg>
          </WinButton>
          <WinButton>
            <Svg width="11" height="11" viewBox="0 0 11 11"><rect x=".5" y=".5" width="10" height="10" fill="none" stroke="#111" /></Svg>
          </WinButton>
          <WinButton>
            <Svg width="11" height="11" viewBox="0 0 11 11"><path d="M.5.500l10 10M10.500.500l-10 10" stroke="#111" /></Svg>
          </WinButton>
        </WinButtons>
      </TitleBar>

      <MenuBar>
        <Logo s={17} />
        <MenuItem $w={6} />
        {menu.map(([m, w]) => <MenuItem key={m} $w={w}>{m}</MenuItem>)}
        <DocButtons>
          <Svg width="9" height="9" viewBox="0 0 9 9"><path d="M1 7.500h7" stroke="#000" strokeWidth="2" /></Svg>
          <Svg width="9" height="9" viewBox="0 0 9 9"><path d="M2.500 2V.7h6v5H7M.5 3h6v5.500h-6z" fill="none" stroke="#000" /></Svg>
          <Svg width="9" height="9" viewBox="0 0 9 9"><path d="M1 1l7 7M8 1L1 8" stroke="#000" strokeWidth="2" /></Svg>
        </DocButtons>
      </MenuBar>

      <ToolArea>
        <ToolRows>
          <ToolRow $h={25}>
            <Grip />
            <Tool $w={87} $ml={5} $text><DataCenterIcon />Data Center</Tool>
            <Sep $ml={2} $mr={6} />
            <Tool $w={85} $text><NewDocIcon />New Project</Tool>
            <Tool $w={18} $ml={4}><FolderIcon /></Tool>
            <Tool $w={18} $ml={5}><FolderIcon save /></Tool>
            <Tool $w={16} $ml={6}><RotateCcw size={17} strokeWidth={3.2} color="#2f9e2f" /></Tool>
            <Sep $ml={6} $mr={2} />
            <Tool $w={75} $on><StopIcon />&nbsp;Stop Test</Tool>
            <Tool $w={17} $ml={2}><DisabledChart /></Tool>
            <Sep $ml={6} $mr={6} />
            <Tool $w={16}><Doc /></Tool>
            <Tool $w={16} $ml={7}>
              <Doc><text x="8" y="15.500" textAnchor="middle" fontSize="10" fontWeight="bold" fill="#17406f" fontFamily={GRID}>P</text></Doc>
            </Tool>
            <Tool $w={16} $ml={7}>
              <GrayDoc><text x="8" y="15.500" textAnchor="middle" fontSize="10" fontWeight="bold" fill="#9a9a9a" fontFamily={GRID}>M</text></GrayDoc>
            </Tool>
            <Tool $w={16} $ml={7}><GrayDoc><Check /></GrayDoc></Tool>
            <Tool $w={16} $ml={7}><GrayDoc><Check c="#808080" /></GrayDoc></Tool>
            <Tool $w={16} $ml={7}><GrayDoc><Check c="#707070" /></GrayDoc></Tool>
            <Tool $w={16} $ml={7}>
              <GrayDoc><path d="M5 9l6 6M11 9l-6 6" stroke="#888" strokeWidth="2" /></GrayDoc>
            </Tool>
            <Tool $w={16} $ml={7}>
              <Doc><path d="M8 6l3.500 4h-7zM8 17l3.500-4h-7z" fill="#1fa83a" /></Doc>
            </Tool>
            <Sep $ml={5} $mr={5} />
            <Tool $w={19}><Bag dir="l" /></Tool>
            <Tool $w={19} $ml={4}><Bag dir="r" /></Tool>
            <Sep $ml={4} $mr={4} />
            <Tool $w={17}><Magnifier plus gray /></Tool>
            <Tool $w={17} $ml={6}><Magnifier /></Tool>
            <Tool $w={15} $ml={8}><Binoculars /></Tool>
            <Tool $w={23} $ml={4} $on><AxisCandles mark="arrow" /></Tool>
            <Tool $w={23} $on><AxisCandles mark="plus" /></Tool>
            <Sep $ml={3} $mr={3} />
            <Tool $w={18}>
              <Axes><path d="M3 15l4-5 3 2 4-6 3 3" fill="none" stroke="#1c8c1c" strokeWidth="1.500" /></Axes>
            </Tool>
            <Tool $w={18} $ml={5}>
              <Axes><path d="M6 15h3V4h4" fill="none" stroke="#0c8a0c" strokeWidth="2.500" /></Axes>
            </Tool>
            <Tool $w={23} $ml={3} $on>
              <Axes>
                <path d="M10 2v13" stroke="#148a14" />
                <rect x="7.500" y="5.500" width="5" height="7" fill="#3cdc3c" stroke="#148a14" />
              </Axes>
            </Tool>
            <Sep $ml={3} $mr={3} />
            <Tool $w={18}><InfoBox /></Tool>
            <Caret $ml={3} />
            <Tool $w={18} $ml={7}><InfoDoc /></Tool>
            <Tool $w={18} $ml={5}><Broom /></Tool>
            <Tool $w={18} $ml={5}><Camera /></Tool>
            <Sep $ml={5} $mr={3} />
            <Tool $w={78} $on><StrategyIcon />Strategies</Tool>
            <Tool $w={15} $ml={3}><ListIcon /></Tool>
          </ToolRow>

          <ToolRow $h={26}>
            <Grip />
            <Tool $w={18} $ml={5}><ChartPlus /></Tool>
            <Caret $ml={2} />
            <Label $ml={9} $w={71}>Time frame:</Label>
            <Select $w={98} $ml={0}>1 hour<Caret /></Select>
            <Tool $w={13} $ml={6}><VArrow up /></Tool>
            <Tool $w={13} $ml={10}><VArrow /></Tool>
            <Tool $w={18} $ml={8}><ClockWrench /></Tool>
            <Grip $ml={14} />
            <Tool $w={23} $ml={2} $on><Pause /></Tool>
            <SliderBox>
              <SliderTrack />
              <SliderThumb />
              <SliderTicks />
            </SliderBox>
            <Select $w={74} $ml={10}>1 hour<Caret /></Select>
            <Tool $w={17} $ml={6}><CandleStep side="l" /></Tool>
            <Tool $w={17} $ml={5}><CandleStep side="r" /></Tool>
            <Tool $w={17} $ml={6}><CandleUpDown /></Tool>
            <Grip $ml={9} />
            <Tool $w={23} $ml={1} $on><CursorIcon /></Tool>
            <Tool $w={15} $ml={3}><Cross /></Tool>
            <Sep $ml={8} $mr={7} />
            <Tool $w={9}><Nodes w={9} h={17} pts={[[4.5, 2], [4.5, 15]]} /></Tool>
            <Tool $w={14} $ml={12}><Nodes w={14} h={7} pts={[[2, 3.5], [12, 3.5]]} /></Tool>
            <Tool $w={14} $ml={9}><Nodes w={14} h={14} pts={[[2, 12], [12, 2]]} /></Tool>
            <Tool $w={15} $ml={8}><Nodes w={15} h={14} pts={[[2, 12], [8, 7], [13, 2]]} /></Tool>
            <Tool $w={15} $ml={8}><Nodes w={15} h={14} pts={[[2, 2], [5, 12], [7.5, 3], [10, 12], [13, 2]]} /></Tool>
            <Tool $w={11} $ml={10}><SerifGlyph>T</SerifGlyph></Tool>
            <Tool $w={12} $ml={12}><ShieldN /></Tool>
            <Tool $w={17} $ml={8}><Waves /></Tool>
            <Tool $w={15} $ml={8}><Fan /></Tool>
            <Sep $ml={6} $mr={8} />
            <Tool $w={10}><SerifGlyph>F</SerifGlyph></Tool>
            <Caret $ml={5} />
            <Tool $w={18} $ml={10}><SlantLines /></Tool>
            <Caret $ml={4} />
            <Tool $w={16} $ml={10}><ColorSwatch /></Tool>
            <Caret $ml={3} />
            <Tool $w={16} $ml={10}><Export /></Tool>
            <Caret $ml={2} />
            <Sep $ml={8} $mr={2} />
            <Tool $w={23} $on><Magnet /></Tool>
            <Tool $w={17} $ml={3}><CrossWin /></Tool>
            <Tool $w={17} $ml={5}><NodeWin /></Tool>
          </ToolRow>
        </ToolRows>
        <MailBox><Mail />1</MailBox>
      </ToolArea>

      <Main>
        <Side>
          <PanelTitle>Statistics</PanelTitle>
          <SideTable
            mt={4}
            rows={statRows}
            h={195}
            headCols="91px 1fr"
            cols="90px 1fr"
            bodyH={175}
          />
          <SideTabs $h={30}>
            <SideTab $pl={9} $w={74}><SymbolsIcon />Symbols</SideTab>
            <TabDivider $mr={3} />
            <SideTab $pl={0} $w={36}><TickIcon />Tic</SideTab>
            <ArrowBtn $ml={3}><Triangle $dir="l" $c="#b0b0b0" /></ArrowBtn>
            <ArrowBtn $ml={1}><Triangle $dir="r" $c="#000" /></ArrowBtn>
          </SideTabs>
          <PanelTitle>Data</PanelTitle>
          <LockRow>
            <LockLabel>Lock index:</LockLabel>
            <SpinInput>
              0
              <Spin>
                <SpinPart><ChevronUp size={9} strokeWidth={3} /></SpinPart>
                <SpinPart><ChevronDown size={9} strokeWidth={3} /></SpinPart>
              </Spin>
            </SpinInput>
          </LockRow>
          <SideTable
            rows={dataRows}
            h={190}
            headCols="78px 1fr"
            cols="77px 1fr"
            bodyH={171}
            valueAlign="flex-end"
            valueHead="flex-end"
          />
          <SideTabs $h={24}>
            <SideTab $pl={4} $w={54} $ml={5} $on><DataIcon />Data</SideTab>
            <SideTab $pl={3} $w={70} $ml={0}><ScriptIcon />&nbsp;Scripts</SideTab>
          </SideTabs>
        </Side>

        <ChartCol>
          <Chart />
          <ChartTabs>
            <ChartTabStrip>
              <ChartTab $w={70}>EURUSD, H4</ChartTab>
              <ChartTab $w={69} $on>GBPUSD, H1</ChartTab>
              <ChartTab $w={74}>USDJPY, M15</ChartTab>
              <TabDivider $mr={0} />
              <ChartTab $w={40}>Profit</ChartTab>
            </ChartTabStrip>
            <HScroll>
              <ChevronLeft size={12} strokeWidth={3} />
              <HThumb />
              <ChevronRight size={12} strokeWidth={3} />
            </HScroll>
            <NavButtons>
              <WindowList />
              <NavIcon d={{ bar: 0, path: 'M10 0v12L3 6z' }} />
              <NavIcon d={{ path: 'M8 0v12L1 6z' }} />
              <NavIcon d={{ path: 'M2 0v12l7-6z' }} />
              <NavIcon d={{ bar: 8, path: 'M0 0v12l7-6z' }} />
            </NavButtons>
          </ChartTabs>
        </ChartCol>
      </Main>

      <Dock>
        <PanelHead>
          Account History
          <RedClose>x</RedClose>
        </PanelHead>
        <FilterRow>
          <FilterLink>Show filters</FilterLink>
          No filters applied
        </FilterRow>
        <GridTable $h={97}>
          <HeadRow $cols={histCols} $h={18}>
            {histHead.map(([t, a]) => <HeadCell key={t} $align={a}>{t}</HeadCell>)}
          </HeadRow>
          <BodyWrap>
            <Rows>
              {histRows.map(r => (
                <Row key={r[0]} $cols={rowCols} $bg={r[8]}>
                  <Cell $pl={4}><TicketIcon up={r[1] === 'buy'} />{r[0]}</Cell>
                  <Cell $align="center">gbpusd</Cell>
                  <Cell $align="center">{r[1]}</Cell>
                  <R>0.10</R>
                  <R>{r[2]}</R>
                  <R>{r[3]}</R>
                  <R>0.0000</R>
                  <R>0.0000</R>
                  <R>{r[4]}</R>
                  <R>{r[5]}</R>
                  <Cell />
                  <R>0.00</R>
                  <R>0.00</R>
                  <R>{r[6]}</R>
                  <R>{r[7]}</R>
                </Row>
              ))}
              <SummaryRow>
                <SummaryText>Profit / Loss: 2386.37 (1818 points) Deposit: 10000.00, Withdrawal: 0.00</SummaryText>
                <SummaryTotal>12386.37</SummaryTotal>
              </SummaryRow>
            </Rows>
            <VScroll $h={77} $mr={1}>
              <ScrollBtn><ChevronUp size={11} strokeWidth={3} /></ScrollBtn>
              <VThumb $mt={25} />
              <ScrollBtn><ChevronDown size={11} strokeWidth={3} /></ScrollBtn>
            </VScroll>
          </BodyWrap>
        </GridTable>
        <BottomTabs>
          <BottomTab $w={113}><Doc w={14} h={18} />Open Positions [0]</BottomTab>
          <TabDivider $mr={4} />
          <BottomTab $w={116}><Doc w={14} h={18}><text x="8" y="15" textAnchor="middle" fontSize="8" fill="#2f6da8" fontFamily={GRID}>P</text></Doc>Pending Orders [0]</BottomTab>
          <BottomTab $w={107} $pl={3} $on><TabGrid />Account History</BottomTab>
          <BottomTab $w={63} $pl={3}><TabList />Journal</BottomTab>
          <TabDivider $mr={3} />
          <BottomTab $w={53}><TabList />News</BottomTab>
          <TabDivider $mr={3} />
          <BottomTab $w={60}><TabList />Notes</BottomTab>
        </BottomTabs>
      </Dock>

      <StatusBar>
        <StatusCell $w={340} />
        <StatusCell $w={205} $sep $bold>2011.09.16 19:59 (Fri)</StatusCell>
        <StatusCell $w={123} $sep>2011.09.16 00:00</StatusCell>
        <StatusCell $w={76} $sep>P: 1.5765</StatusCell>
        <StatusCell $w={77} $sep>O: 1.5796</StatusCell>
        <StatusCell $w={75} $sep>H:1.5797</StatusCell>
        <StatusCell $w={77} $sep>L: 1.5780</StatusCell>
        <StatusCell $w={75} $sep>C: 1.5782</StatusCell>
        <StatusCell $w={76} $sep>V: 4109</StatusCell>
      </StatusBar>
    </Window>
  );
}
